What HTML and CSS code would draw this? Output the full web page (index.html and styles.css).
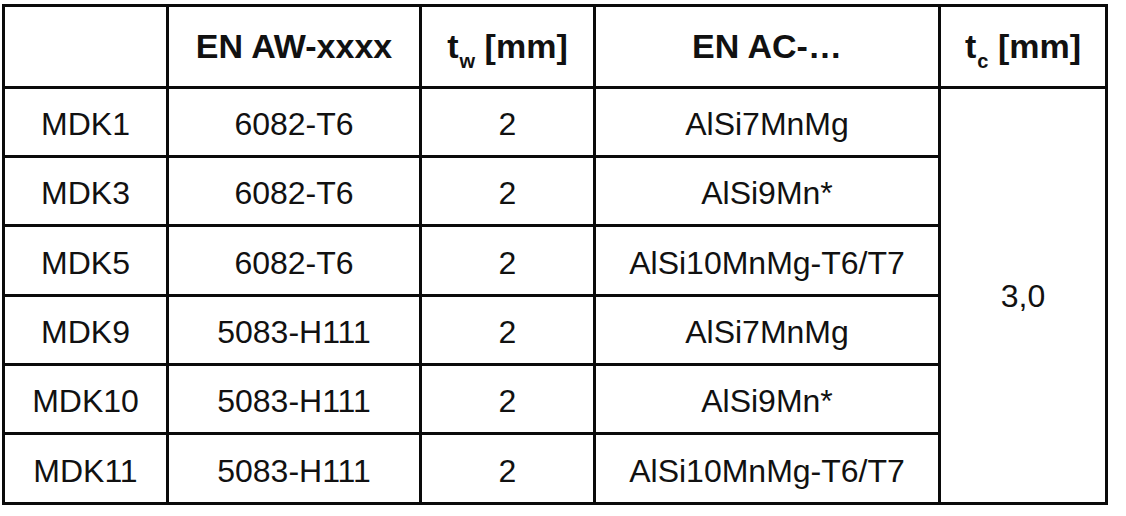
FILE: index.html
```html
<!DOCTYPE html>
<html lang="de">
<head>
<meta charset="utf-8">
<title>Werkstoffkombinationen</title>
<link rel="stylesheet" href="styles.css">
</head>
<body>
<div class="table">
  <div class="cell head"></div>
  <div class="cell head"><span class="label">EN AW-xxxx</span></div>
  <div class="cell head"><span class="label">t<sub>w</sub> [mm]</span></div>
  <div class="cell head"><span class="label">EN AC-…</span></div>
  <div class="cell head"><span class="label">t<sub>c</sub> [mm]</span></div>

  <div class="cell">MDK1</div>
  <div class="cell">6082-T6</div>
  <div class="cell">2</div>
  <div class="cell">AlSi7MnMg</div>
  <div class="cell merged">3,0</div>

  <div class="cell">MDK3</div>
  <div class="cell">6082-T6</div>
  <div class="cell">2</div>
  <div class="cell">AlSi9Mn*</div>

  <div class="cell">MDK5</div>
  <div class="cell">6082-T6</div>
  <div class="cell">2</div>
  <div class="cell">AlSi10MnMg-T6/T7</div>

  <div class="cell">MDK9</div>
  <div class="cell">5083-H111</div>
  <div class="cell">2</div>
  <div class="cell">AlSi7MnMg</div>

  <div class="cell">MDK10</div>
  <div class="cell">5083-H111</div>
  <div class="cell">2</div>
  <div class="cell">AlSi9Mn*</div>

  <div class="cell">MDK11</div>
  <div class="cell">5083-H111</div>
  <div class="cell">2</div>
  <div class="cell">AlSi10MnMg-T6/T7</div>
</div>
</body>
</html>
```

FILE: styles.css
```css
html, body {
  margin: 0;
  padding: 0;
  background: #ffffff;
}

body {
  font-family: "Liberation Sans", Arial, sans-serif;
  color: #111111;
  padding: 4px 0 0 2px;
}

.table {
  display: grid;
  grid-template-columns: 164px 253px 174px 345px 167px;
  grid-template-rows: 82px 69px 69px 70px 69px 69px 70px;
  width: max-content;
  border-left: 3px solid #0a0a0a;
  border-top: 3px solid #0a0a0a;
}

.cell {
  box-sizing: border-box;
  border-right: 3px solid #0a0a0a;
  border-bottom: 3px solid #0a0a0a;
  display: flex;
  align-items: center;
  justify-content: center;
  font-size: 32px;
  line-height: 1;
  padding-top: 4px;
  white-space: nowrap;
}

.head {
  font-weight: bold;
  font-size: 34px;
  padding-top: 0;
  padding-bottom: 2px;
}

.label {
  display: block;
  white-space: pre;
}

.label sub {
  font-size: 20px;
  vertical-align: -10px;
  line-height: 0;
  margin-left: 1px;
}

.merged {
  grid-column: 5;
  grid-row: 2 / span 6;
  padding-top: 0;
}
```
